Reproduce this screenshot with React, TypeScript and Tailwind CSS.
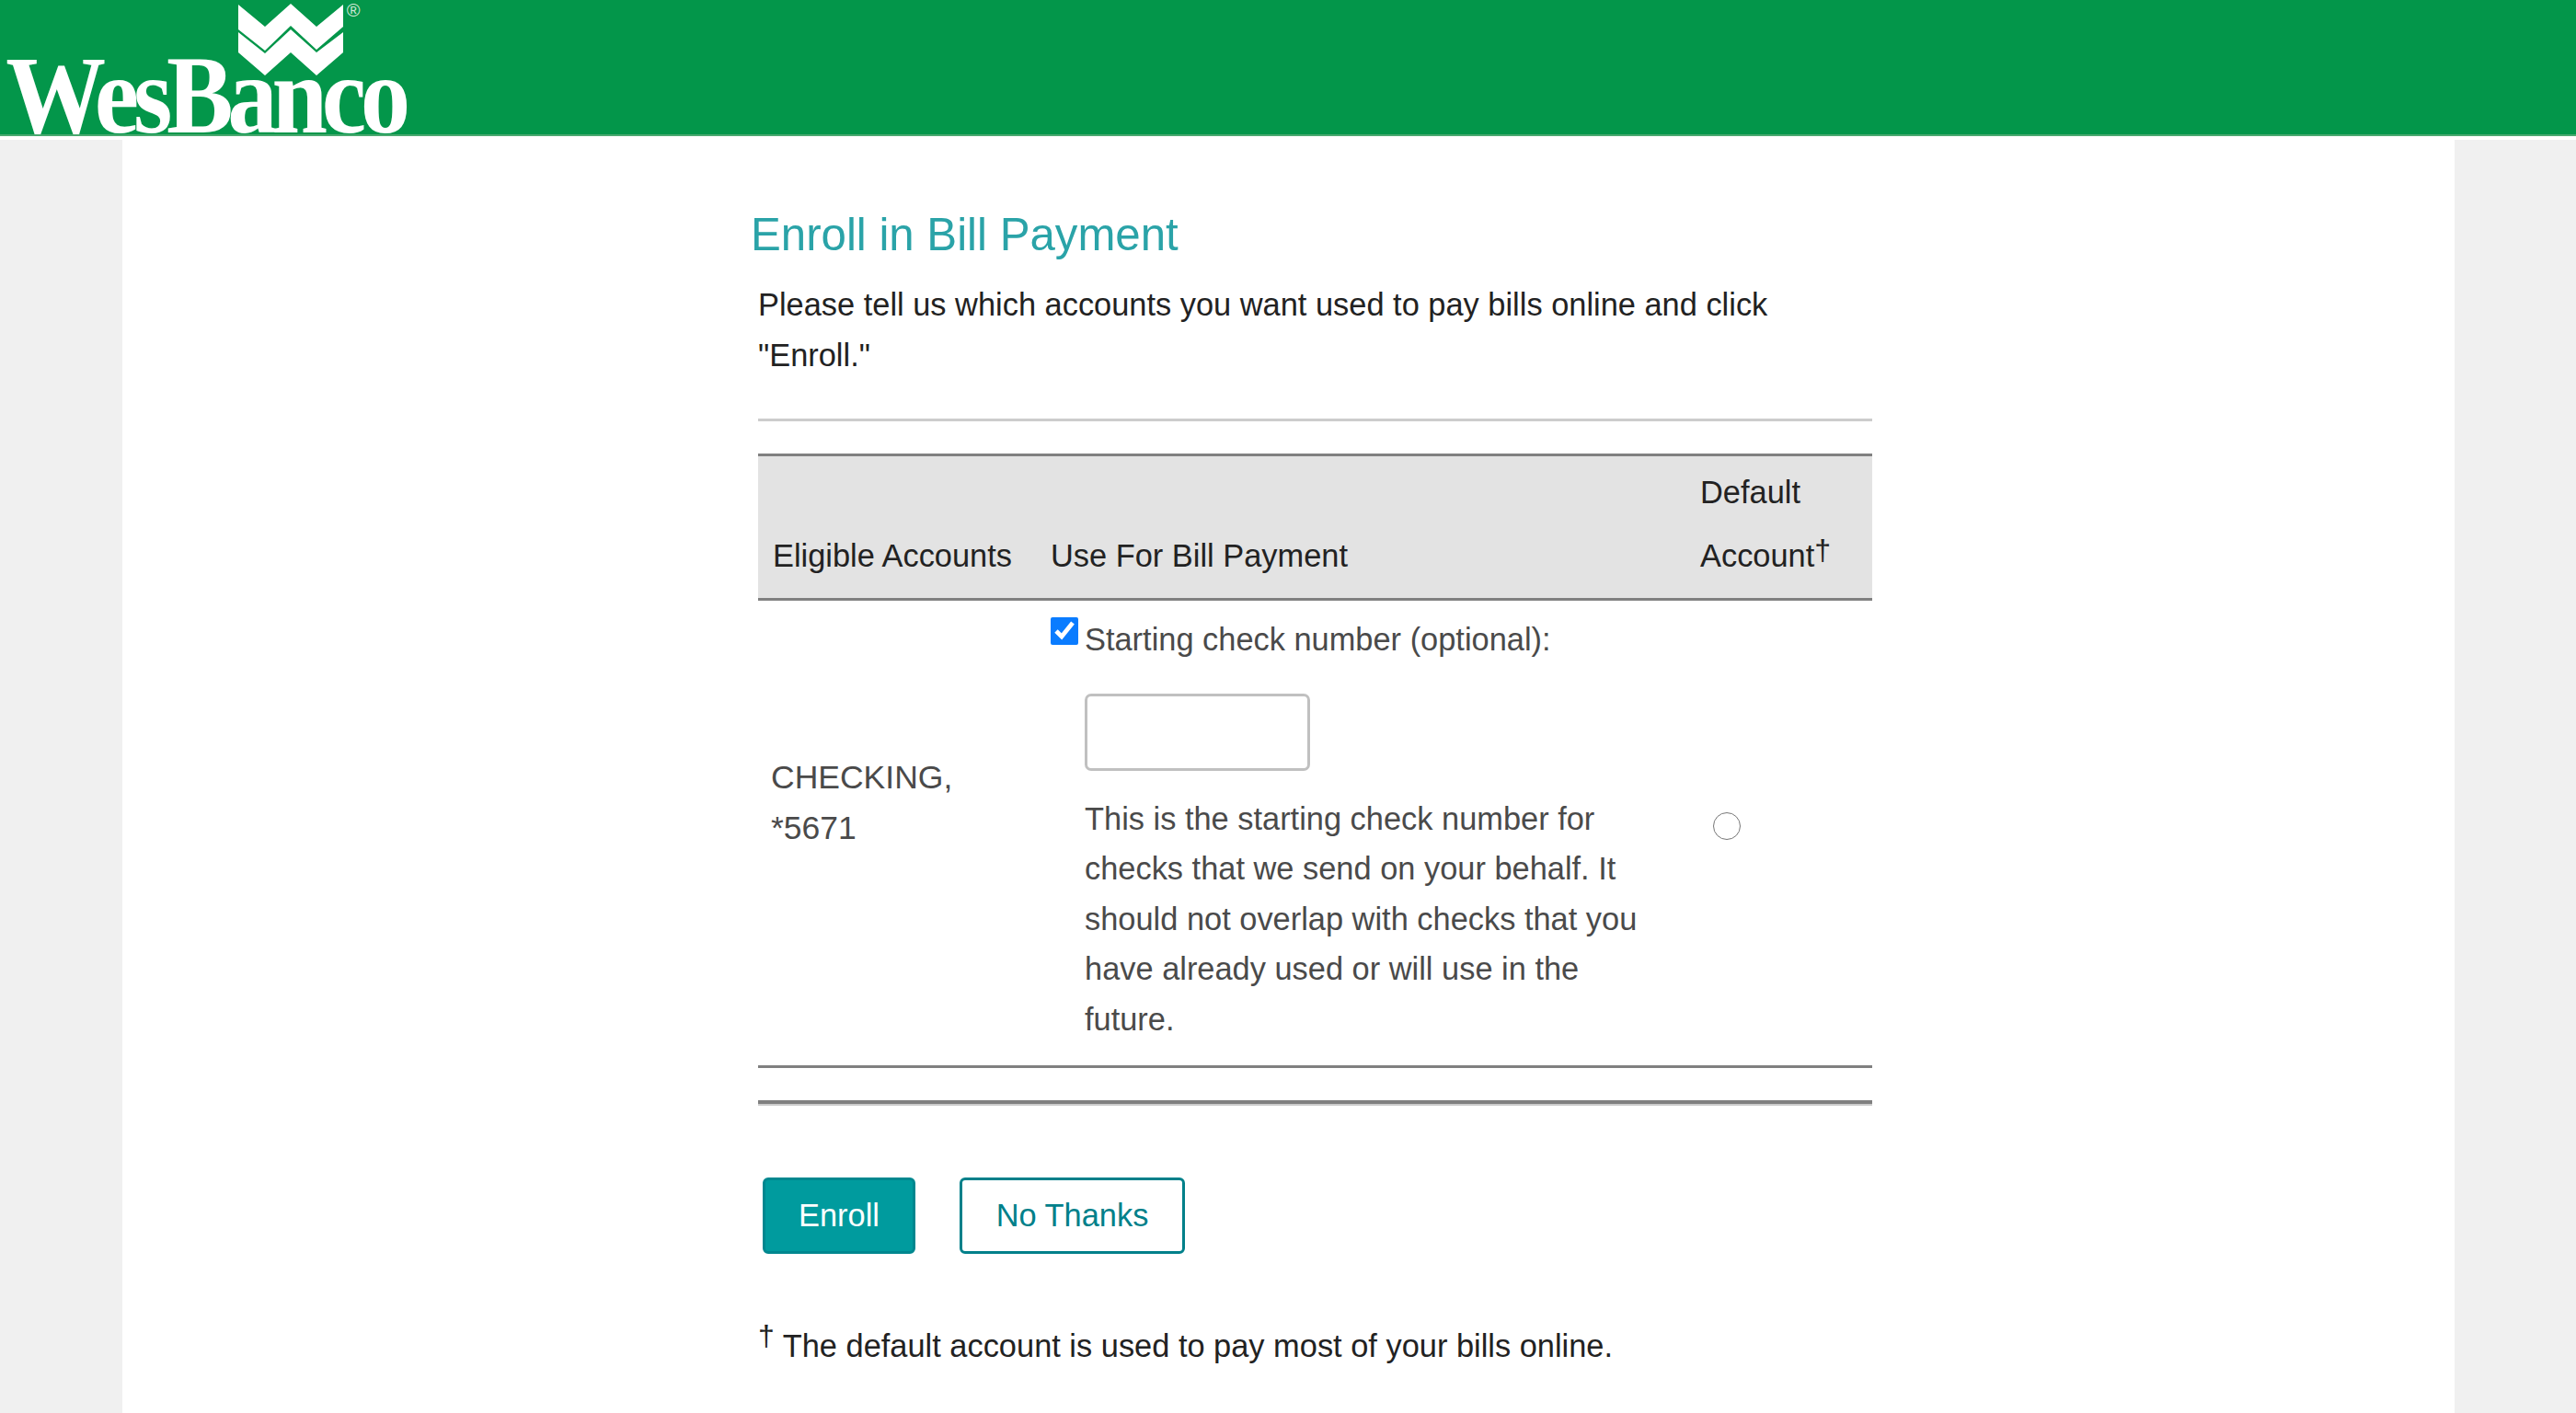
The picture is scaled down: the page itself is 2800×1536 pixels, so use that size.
import React from "react";

const Logo = () => (
    <svg width="450" height="146" viewBox="0 0 450 146" className="block shrink-0 overflow-visible">
        <g fill="#ffffff">
            <path d="M259 5 L288 29 L316 4 L344 29 L373 5 L373 29 L344 54 L316 28 L288 55 L259 32 Z" />
            <path d="M259 35 L288 58 L316 32 L344 57 L373 35 L373 57 L344 82 L316 57 L288 82 L259 57 Z" />
        </g>
        <text x="384" y="18" fontSize="20" fill="#cfe8d6" textAnchor="middle" fontFamily="Liberation Sans, sans-serif">®</text>
        <text x="7" y="144" fontSize="121" fontWeight="700" fill="#ffffff" letterSpacing="-7" transform="scale(0.9 1)" fontFamily="Liberation Serif, serif">WesBanco</text>
    </svg>
);

export default function App() {
    return (
        <div className="min-h-[1536px] bg-white font-['Liberation_Sans',Arial,sans-serif] text-[34.4px] leading-[54.5px] text-[#222]">
            <header className="h-[148px] bg-[#03964a] border-b-2 border-[#4aa96f]">
                <Logo />
            </header>
            <div className="pt-1 flex">
                <div className="w-[133px] h-[1384px] bg-[#f0f0f0]" />
                <main className="flex-1 pl-[691px] pr-[633px] pt-[75px]">
                    <h1 className="ml-[-8px] text-[49.2px] leading-[56px] text-[#2aa3a8]">Enroll in Bill Payment</h1>
                    <p className="mt-[21px]">
                        Please tell us which accounts you want used to pay bills online and click "Enroll."
                    </p>
                    <hr className="mt-[42px] border-0 border-t-[3px] border-[#cccccc]" />
                    <table className="mt-[35px] w-full table-fixed border-collapse">
                        <colgroup>
                            <col className="w-[301px]" />
                            <col className="w-[710px]" />
                            <col />
                        </colgroup>
                        <thead>
                            <tr className="bg-[#e3e3e3] border-y-[3px] border-[#808080] align-bottom">
                                <th className="pl-4 pb-[19px] font-normal text-left">Eligible Accounts</th>
                                <th className="pl-[17px] pb-[19px] font-normal text-left">Use For Bill Payment</th>
                                <th className="pl-[13px] pt-[12px] pb-[19px] font-normal text-left">
                                    <span className="block">Default</span>
                                    <span className="block mt-[14px]">
                                        Account<sup className="text-[32px] leading-none top-[-7px]">†</sup>
                                    </span>
                                </th>
                            </tr>
                        </thead>
                        <tbody>
                            <tr className="border-b-[3px] border-[#808080] text-[#4a4a4a]">
                                <td className="pl-[14px] pr-[80px] pb-[66px] text-[35.5px] align-middle">CHECKING, *5671</td>
                                <td className="pl-[17px] pt-[12px] pb-[23px] align-top">
                                    <div className="flex items-start">
                                        <input type="checkbox" defaultChecked className="mt-[6px] w-[30px] h-[30px] accent-[#0a7cff] shrink-0" />
                                        <span className="ml-[7px] mt-[3px]">Starting check number (optional):</span>
                                    </div>
                                    <div className="pl-[37px]">
                                        <input type="text" className="block mt-[31px] w-[245px] h-[84px] border-[3px] border-[#c0c0c0] rounded-[7px] bg-white" />
                                        <p className="mt-[25px] pr-[30px]">
                                            This is the starting check number for checks that we send on your behalf. It should not overlap with checks that you have already used or will use in the future.
                                        </p>
                                    </div>
                                </td>
                                <td className="pl-[27px] pb-[15px] align-middle">
                                    <input type="radio" className="block w-[30px] h-[30px] accent-[#0a7cff]" />
                                </td>
                            </tr>
                        </tbody>
                    </table>
                    <div className="mt-[35px] border-t-[4px] border-[#808080] h-[6px] bg-[#cccccc]" />
                    <div className="mt-[78px] ml-[5px] flex gap-[48px]">
                        <button className="w-[166px] h-[83px] rounded-[6px] bg-[#009b9e] border-[3px] border-[#00878f] text-white">Enroll</button>
                        <button className="w-[245px] h-[83px] rounded-[6px] bg-white border-[3px] border-[#00808a] text-[#00808a]">No Thanks</button>
                    </div>
                    <p className="mt-[73px]"><sup className="text-[32px] leading-none top-[-12px]">†</sup> The default account is used to pay most of your bills online.</p>
                </main>
                <div className="w-[132px] h-[1384px] bg-[#f0f0f0]" />
            </div>
        </div>
    );
}
